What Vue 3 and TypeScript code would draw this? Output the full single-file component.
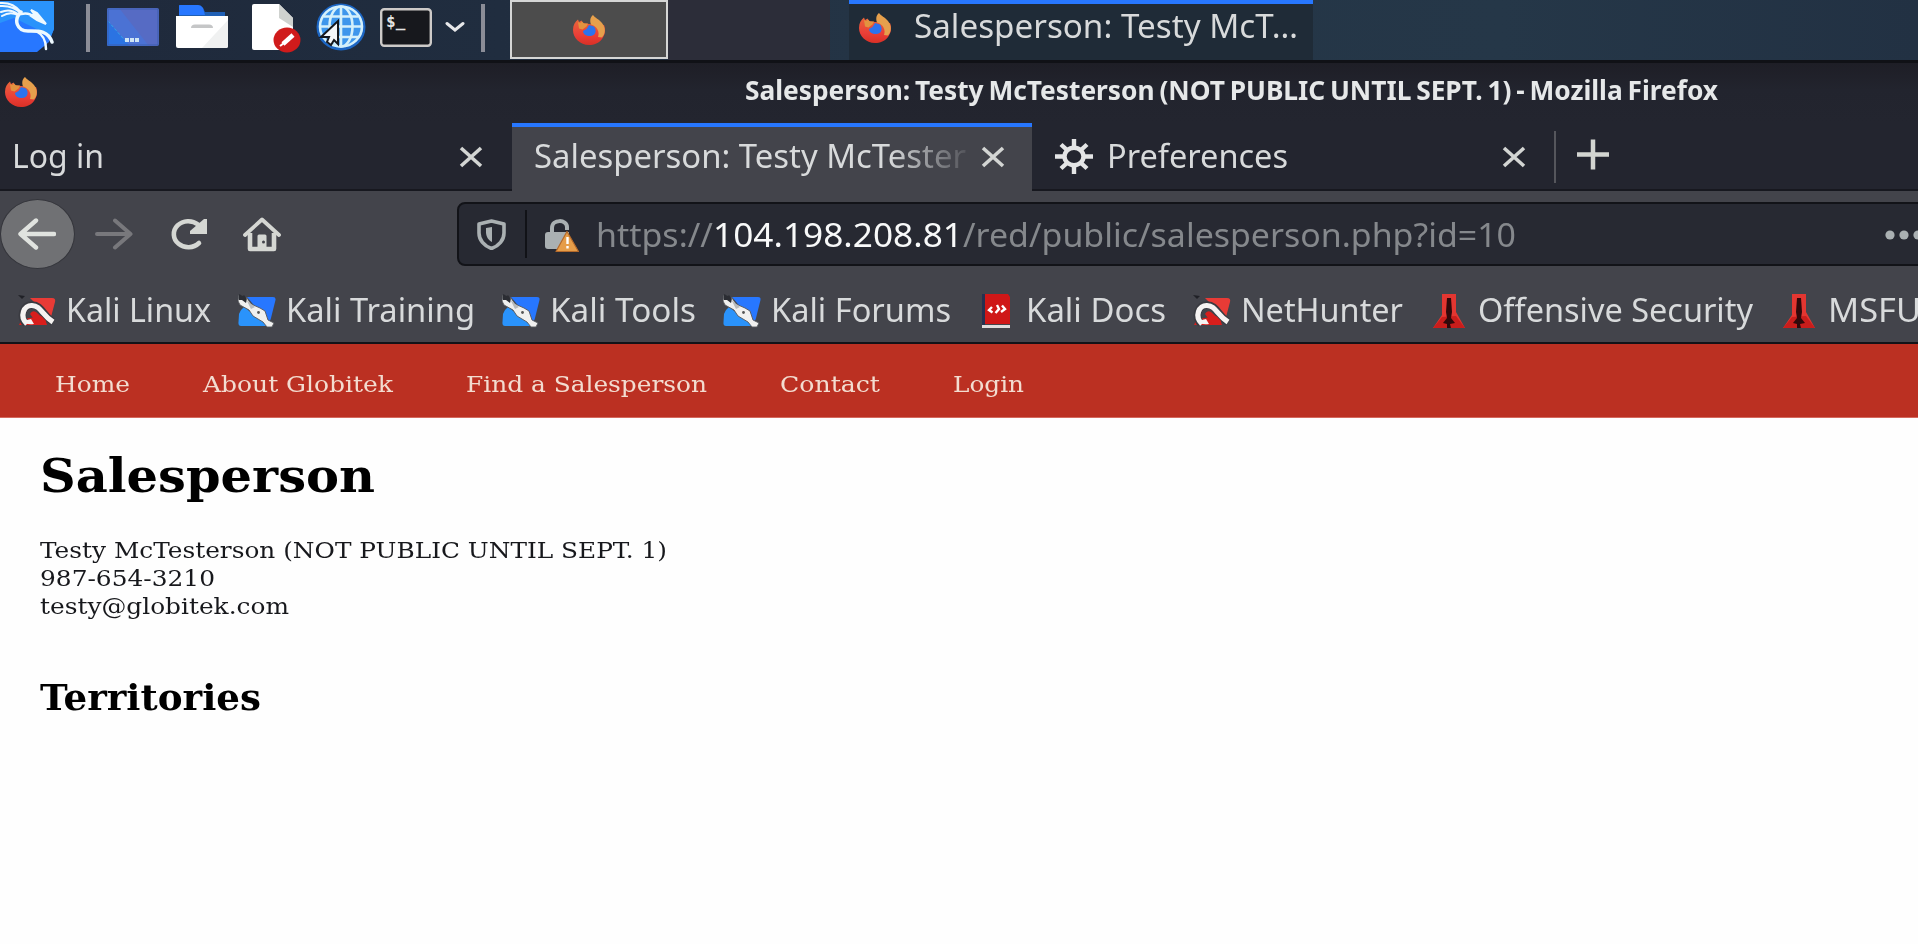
<script setup lang="ts">
import type { Directive } from 'vue'

interface Bookmark {
  label: string
  icon: 'dragon-red' | 'dragon-blue' | 'docs' | 'offsec'
  width: number
}

interface NavLink {
  label: string
  width: number
}

// Stretches a line of text horizontally so that it takes exactly the given width.
const vFit: Directive<HTMLElement, number> = {
  mounted(el, binding) {
    const natural = el.getBoundingClientRect().width
    if (!natural) return
    el.style.transform = `scaleX(${binding.value / natural})`
    el.style.marginRight = `${binding.value - natural}px`
  },
}

const bookmarks: Bookmark[] = [
  { label: 'Kali Linux', icon: 'dragon-red', width: 145 },
  { label: 'Kali Training', icon: 'dragon-blue', width: 189 },
  { label: 'Kali Tools', icon: 'dragon-blue', width: 146 },
  { label: 'Kali Forums', icon: 'dragon-blue', width: 180 },
  { label: 'Kali Docs', icon: 'docs', width: 140 },
  { label: 'NetHunter', icon: 'dragon-red', width: 162 },
  { label: 'Offensive Security', icon: 'offsec', width: 275 },
  { label: 'MSFU', icon: 'offsec', width: 93 },
]

const links: NavLink[] = [
  { label: 'Home', width: 75 },
  { label: 'About Globitek', width: 190 },
  { label: 'Find a Salesperson', width: 241 },
  { label: 'Contact', width: 100 },
  { label: 'Login', width: 71 },
]
</script>

<template>
  <svg class="defs" aria-hidden="true">
    <defs>
      <linearGradient id="ffBody" x1="0" y1="0" x2="0" y2="1">
        <stop offset="0" stop-color="#e8663a" />
        <stop offset="0.6" stop-color="#ea3f38" />
        <stop offset="1" stop-color="#d93026" />
      </linearGradient>
      <symbol id="firefox" viewBox="0 0 34 31" preserveAspectRatio="none">
        <path d="M1 16C1 11 3 8 6 5.500L7 8L9.500 6.500L11 9L17 10L32 11C34 16 33 21 30 25C27 29 22 31 17 31C8 31 1 24 1 16Z" fill="url(#ffBody)" />
        <path d="M21 1C23 4 27 5 30 9C34 14 33.500 20 30 23.500L26 23C28 18 25 12 19 10.500C17.500 6 18.500 3 21 1Z" fill="#e6a04c" />
        <path d="M6 8L8 9L10 7.500L12 9.500L16 9.500L14.500 12.500L10.500 15.500L7 14.500Z" fill="#e2933f" />
        <path d="M17 11L22 12.500C25 16 24 22 18 22C14 22 11 20 11 17L14.500 15Z" fill="#2b73ee" />
      </symbol>
      <symbol id="dragon-blue" viewBox="0 0 38 34" preserveAspectRatio="none">
        <path d="M9 3H35Q38 3 37.500 6L33 24Q32 28 29 27Z" fill="#2777ff" />
        <path d="M1 20Q2 16 6 13L31 32H3Q0 32 0.500 28Z" fill="#2a93fb" />
        <path d="M1 1L9 4L13 10L22 14L27 17L30 26L36 29L34 33L29 33L25 28L15 22L11 16L2 11L0 7Z" fill="#f0f0ef" stroke="#55585c" stroke-width="0.900" />
        <path d="M1 0L5 2L6 1L9 5L8 9L4 6L1 6Z" fill="#2b2d33" />
        <path d="M8 5L12 9L17 13L13 15Z" fill="#b9bbbc" />
        <circle cx="20.500" cy="18.500" r="1.400" fill="#555" />
      </symbol>
      <symbol id="dragon-red" viewBox="0 0 38 34" preserveAspectRatio="none">
        <path d="M12 4H34Q38 4 37 8L33 23L24 16Z" fill="#e83b36" />
        <path d="M1 31L4 25L26 22L29 31Z" fill="#d81e1c" />
        <path d="M0 1L7 2L4 5Z" fill="#202127" />
        <path d="M8 30C1 22 5 11 14 11C24 11 24 21 35 28" fill="none" stroke="#3a3b41" stroke-width="7.500" />
        <path d="M9 30C1 22 6 11 14 11.500C23 12 23 20 35 28" fill="none" stroke="#f5f3f2" stroke-width="5.200" />
        <path d="M5 27Q7 31 16 30L13 25Z" fill="#f5f3f2" />
        <path d="M12 20Q14 16 18 18L28 27L27 31H20Z" fill="#d81e1c" />
      </symbol>
      <symbol id="docs" viewBox="0 0 38 34" preserveAspectRatio="none">
        <rect x="4" y="0" width="3" height="32" fill="#263050" />
        <path d="M7 0H30L32 3V30H7Z" fill="#cf1717" />
        <rect x="4" y="31" width="28" height="3" fill="#dfdddd" />
        <path d="M14 13L11 16L14.500 18.500M19 11L21 15L17.500 19M24 11.500L27 15L23 18" fill="none" stroke="#fff" stroke-width="2.400" />
      </symbol>
      <symbol id="offsec" viewBox="0 0 38 34" preserveAspectRatio="none">
        <path d="M12 0H26V18L35 34H3L12 21Z" fill="#e33631" />
        <path d="M12 23L3 34H35L26 22Z" fill="#c91d1b" />
        <path d="M17 4H21L22 18L21 24L25 29L20 30L21 34H17L17 30L13 29L17 24L16 18Z" fill="#30090b" />
      </symbol>
    </defs>
  </svg>

  <div class="screen">
    <header class="taskbar">
      <svg class="kali" viewBox="0 0 54 52">
        <path d="M0 0H54V28L49 41L37 51H0Z" fill="#2777ff" />
        <path d="M0 0H54V28L51 35L14 17L0 22Z" fill="#2a93fb" />
        <g fill="none" stroke="#eef9ff" stroke-linecap="round">
          <path d="M0 5Q13 4 22 13M0 2Q13 1 21 11M1 11Q10 7 18 13M2 15Q10 10 18 14" stroke-width="2" />
          <path d="M21 11C13 19 17 30 28 30C38 30 48 29 52 41" stroke-width="3.500" />
          <path d="M36 30Q46 35 46 48M21 13Q29 11 34 16" stroke-width="2.500" />
          <path d="M31 9L37 12L46 23L37 19L31 15L34 13Z" stroke-width="2" fill="#eef9ff" />
        </g>
      </svg>
      <i class="sep"></i>
      <svg class="desktop" viewBox="0 0 52 38">
        <rect width="52" height="38" rx="2" fill="#566bc4" />
        <path d="M0 2Q0 0 2 0H12L42 38H2Q0 38 0 36Z" fill="#4b72d4" />
        <path d="M0 12L23 38H2Q0 38 0 36Z" fill="#2b73e2" />
        <path d="M1 13L20 35" stroke="#35a3e8" stroke-dasharray="3 2" />
        <path d="M1 1H51V37H1Z" fill="none" stroke="#3c5fae" stroke-width="1" />
        <path d="M18 32H33" stroke="#cfe5f5" stroke-width="4" stroke-dasharray="4 1" />
      </svg>
      <svg class="folder" viewBox="0 0 52 44">
        <path d="M3 1Q3 0 4 0H22Q25 0 27 3L29 7H49V14H3Z" fill="#1f5fb4" />
        <path d="M3 1Q3 0 4 0H22Q25 0 27 3L29 10H3Z" fill="#2777ff" />
        <path d="M0 11H52V41Q52 43 50 43H2Q0 43 0 41Z" fill="#fff" />
        <path d="M52 15V41Q52 43 50 43H26Z" fill="#f0f1f1" />
        <path d="M15 23Q15 19.500 19 19.500H33Q37 19.500 37 23Z" fill="#c5c6c7" />
      </svg>
      <svg class="doc" viewBox="0 0 49 49">
        <path d="M2 0H27L41 14V46H2Q0 46 0 44V2Q0 0 2 0Z" fill="#fff" />
        <path d="M27 0L41 14V23L27 14Z" fill="#cfd2cf" />
        <ellipse cx="35" cy="36" rx="13.500" ry="12.500" fill="#d01b1b" />
        <path d="M31 40L41 31" stroke="#fff" stroke-width="4.500" />
        <path d="M28 42L32 39" stroke="#fff" stroke-width="2" />
      </svg>
      <svg class="globe" viewBox="0 0 50 48">
        <ellipse cx="25" cy="24" rx="24.500" ry="23.500" fill="#1c66c4" />
        <ellipse cx="25" cy="23.500" rx="22" ry="21" fill="#3d96ec" />
        <g fill="none" stroke="#d4f0fb" stroke-width="2.600">
          <ellipse cx="25" cy="23.500" rx="21" ry="20" />
          <ellipse cx="25" cy="23.500" rx="11.500" ry="20" />
          <path d="M25 3V44M4 23.500H46M8 13.500H42M8 34H42" />
        </g>
        <path d="M22 18V41L18 37L15 42L11 39L13 34L5 34Z" fill="#f4f7fa" stroke="#14171d" stroke-width="2" />
      </svg>
      <svg class="terminal" viewBox="0 0 52 39">
        <rect x="1.200" y="1.200" width="49.600" height="36.600" rx="3" fill="#17181d" stroke="#cdcac8" stroke-width="2.400" />
        <text x="6" y="19" class="prompt">$_</text>
      </svg>
      <svg class="chevron" viewBox="0 0 20 12">
        <path d="M2 2.500L10 9L18 2.500" fill="none" stroke="#e7e8ea" stroke-width="3" stroke-linecap="round" />
      </svg>
      <i class="sep last"></i>
      <div class="workspace"><svg class="ff"><use href="#firefox" /></svg></div>
      <div class="workspace-idle"></div>
      <div class="task">
        <svg class="ff"><use href="#firefox" /></svg>
        <span v-fit="384" class="ui">Salesperson: Testy McT…</span>
      </div>
    </header>

    <div class="titlebar">
      <svg class="ff"><use href="#firefox" /></svg>
      <span v-fit="973" class="title">Salesperson: Testy McTesterson (NOT PUBLIC UNTIL SEPT. 1) - Mozilla Firefox</span>
    </div>

    <div class="tabs">
      <div class="tab first">
        <span v-fit="92" class="ui">Log in</span>
        <svg class="close" viewBox="0 0 24 22"><path d="M2 2L22 20M22 2L2 20" /></svg>
      </div>
      <div class="tab active">
        <div class="fade"><span v-fit="432" class="ui">Salesperson: Testy McTester</span></div>
        <svg class="close" viewBox="0 0 24 22"><path d="M2 2L22 20M22 2L2 20" /></svg>
      </div>
      <div class="tab prefs">
        <svg class="gear" viewBox="0 0 38 35">
          <ellipse cx="19" cy="17.500" rx="9.500" ry="8.700" fill="none" stroke="#e4e5e6" stroke-width="4.400" />
          <path d="M19 0V7M19 28V35M0 17.500H8M30 17.500H38M6 5.500L12 11M26 24L32 29.500M32 5.500L26 11M12 24L6 29.500" stroke="#e4e5e6" stroke-width="4.400" />
        </svg>
        <span v-fit="181" class="ui">Preferences</span>
        <svg class="close" viewBox="0 0 24 22"><path d="M2 2L22 20M22 2L2 20" /></svg>
      </div>
      <i class="tab-sep"></i>
      <svg class="plus" viewBox="0 0 34 31"><path d="M1 15.500H33M17 0.500V30.500" stroke="#d3d5d1" stroke-width="4.500" /></svg>
    </div>

    <div class="toolbar">
      <div class="back">
        <svg viewBox="0 0 38 32"><path d="M36 16H3M18 2.500L2.500 16L18 29.500" fill="none" stroke="#e0e3df" stroke-width="4.400" stroke-linecap="round" stroke-linejoin="round" /></svg>
      </div>
      <svg class="forward" viewBox="0 0 38 32"><path d="M2 16H35M20 2.500L35.500 16L20 29.500" fill="none" stroke="#78787c" stroke-width="4" stroke-linecap="round" stroke-linejoin="round" /></svg>
      <svg class="reload" viewBox="0 0 37 32">
        <path d="M28 25A14.500 13 0 1 1 27 6.500" fill="none" stroke="#d5d7d3" stroke-width="4.600" stroke-linecap="round" />
        <path d="M36 1V16H19V13L33 1Z" fill="#d5d7d3" />
      </svg>
      <svg class="home" viewBox="0 0 38 35">
        <path d="M2 18L19 2.500L36 18" fill="none" stroke="#d5d7d3" stroke-width="3.800" stroke-linecap="round" stroke-linejoin="round" />
        <path d="M7 16V32H31V16" fill="none" stroke="#d5d7d3" stroke-width="4.600" stroke-linejoin="round" />
        <path d="M14.500 33V19Q14.500 17.500 16 17.500H22Q23.500 17.500 23.500 19V33Z" fill="#d5d7d3" />
        <circle cx="20.500" cy="25" r="1.500" fill="#43444b" />
      </svg>
      <div class="urlbar">
        <svg class="shield" viewBox="0 0 29 31">
          <path d="M14.500 2L27 5V14C27 21 22 27 14.500 29.500C7 27 2 21 2 14V5Z" fill="none" stroke="#aab0b2" stroke-width="3.600" stroke-linejoin="round" />
          <path d="M15 8V23C11 21 9.500 18 9 14V9Z" fill="#aab0b2" />
        </svg>
        <i class="url-sep"></i>
        <svg class="lock" viewBox="0 0 34 33">
          <path d="M7 14V9C7 0 22 0 22 8V11" fill="none" stroke="#aab0b2" stroke-width="4" />
          <path d="M3 13H24V30H3Q0 30 0 27V16Q0 13 3 13Z" fill="#aab0b2" />
          <path d="M22 12.500L33.500 32.500H11Z" fill="#e69d49" stroke="#b56a2b" stroke-width="1.200" stroke-linejoin="round" />
          <path d="M22.500 18V25M22.500 27V29.500" stroke="#fff" stroke-width="2.400" />
        </svg>
        <div class="url">
          <span v-fit="117" class="ui dim">https://</span>
          <span v-fit="250" class="ui host">104.198.208.81</span>
          <span v-fit="553" class="ui dim">/red/public/salesperson.php?id=10</span>
        </div>
        <svg class="dots" viewBox="0 0 40 10">
          <circle cx="5" cy="5" r="4.600" /><circle cx="19" cy="5" r="4.600" /><circle cx="33" cy="5" r="4.600" />
        </svg>
      </div>
    </div>

    <div class="bookmarks">
      <div v-for="b in bookmarks" :key="b.label" class="bookmark">
        <svg class="bm-icon"><use :href="`#${b.icon}`" /></svg>
        <span v-fit="b.width" class="ui">{{ b.label }}</span>
      </div>
    </div>

    <nav class="nav">
      <a v-for="l in links" :key="l.label" v-fit="l.width">{{ l.label }}</a>
    </nav>

    <main class="page">
      <h1><span v-fit="335">Salesperson</span></h1>
      <p><span v-fit="627">Testy McTesterson (NOT PUBLIC UNTIL SEPT. 1)</span></p>
      <p><span v-fit="175">987-654-3210</span></p>
      <p><span v-fit="249">testy@globitek.com</span></p>
      <h2><span v-fit="221">Territories</span></h2>
    </main>
  </div>
</template>

<style>
body {
  margin: 0;
  overflow: hidden;
  background: #fefefe;
}
</style>

<style scoped>
.defs {
  position: absolute;
  width: 0;
  height: 0;
}
svg {
  display: block;
  flex: none;
}
.screen {
  width: 1918px;
  height: 944px;
  overflow: hidden;
  background: #fefefe;
  font-family: "Noto Sans", "Open Sans", sans-serif;
}
.screen span,
.nav a {
  display: inline-block;
  flex: none;
  white-space: nowrap;
  transform-origin: 0 50%;
}
.ui {
  font-size: 32px;
  line-height: 44px;
  color: #d8dadb;
}

.taskbar {
  box-sizing: border-box;
  height: 63px;
  display: flex;
  align-items: flex-start;
  border-bottom: 3px solid #101116;
  background: linear-gradient(90deg, #1f293b 0, #202d3f 500px, #243445 850px, #253748 1500px, #223143 1918px);
}
.taskbar > * { flex: none; }
.kali { width: 54px; height: 52px; margin-top: 1px; }
.sep { width: 4px; height: 48px; margin: 4px 17px 0 32px; background: #8b8d97; }
.desktop { width: 52px; height: 38px; margin-top: 8px; }
.folder { width: 52px; height: 44px; margin: 5px 0 0 17px; }
.doc { width: 49px; height: 49px; margin: 4px 0 0 24px; }
.globe { width: 50px; height: 48px; margin: 3px 0 0 15px; }
.terminal { width: 52px; height: 39px; margin: 8px 0 0 14px; }
.prompt { font: bold 16px "DejaVu Sans Mono", monospace; fill: #e4e4e4; }
.chevron { width: 20px; height: 12px; margin: 21px 0 0 13px; }
.sep.last { margin: 4px 25px 0 16px; }
.workspace {
  box-sizing: border-box;
  width: 158px;
  height: 59px;
  padding: 12px 0 0 60px;
  border: 2px solid #d5d6d5;
  background: #4c4c4c;
}
.workspace-idle { width: 162px; height: 60px; background: #2c2d39; }
.ff { width: 34px; height: 31px; }
.task {
  box-sizing: border-box;
  display: flex;
  width: 464px;
  height: 60px;
  margin-left: 19px;
  padding-left: 9px;
  border-top: 4px solid #2777ff;
  background: #1f2b37;
}
.task .ff { margin: 8px 22px 0 0; }
.task .ui { margin-top: 0; }

.titlebar {
  height: 60px;
  display: flex;
  background: linear-gradient(#1e1e26, #22242e 45%, #23252f);
}
.titlebar .ff { margin: 13px 0 0 4px; }
.title {
  margin: 9px 0 0 707px;
  font-size: 26px;
  line-height: 36px;
  font-weight: 700;
  word-spacing: -2px;
  color: #e6e8e9;
}

.tabs {
  height: 68px;
  display: flex;
  background: #23252f;
  box-shadow: inset 0 -2px #17181f;
}
.tab {
  box-sizing: border-box;
  height: 68px;
  display: flex;
}
.tab .ui { margin-top: 11px; }
.first { width: 512px; padding-left: 12px; }
.active {
  width: 520px;
  padding-left: 22px;
  border-top: 4px solid #2777ff;
  background: #43444b;
}
.active .ui { margin-top: 7px; }
.fade {
  width: 436px;
  overflow: hidden;
  -webkit-mask-image: linear-gradient(90deg, #000 355px, transparent 442px);
  mask-image: linear-gradient(90deg, #000 355px, transparent 442px);
}
.prefs { width: 522px; padding-left: 22px; }
.close {
  width: 24px;
  height: 22px;
  margin-top: 23px;
  fill: none;
  stroke: #d3d5d3;
  stroke-width: 3.6;
}
.first .close { margin-left: 355px; }
.active .close { margin: 19px 0 0 11px; }
.prefs .close { margin-left: 214px; }
.gear { width: 38px; height: 35px; margin: 16px 14px 0 1px; }
.tab-sep { width: 2px; height: 52px; margin-top: 8px; background: #55565c; }
.plus { width: 34px; height: 31px; margin: 16px 0 0 20px; }
.tab-sep,
.plus { flex: none; }

.toolbar {
  height: 84px;
  display: flex;
  align-items: flex-start;
  background: #43444b;
}
.back {
  box-sizing: border-box;
  flex: none;
  width: 75px;
  height: 70px;
  margin-top: 8px;
  padding: 18px 0 0 17px;
  border: 1px solid #34353b;
  border-radius: 50%;
  background: #707174;
}
.back svg,
.forward { width: 38px; height: 32px; }
.forward { margin: 27px 0 0 20px; }
.reload { width: 37px; height: 32px; margin: 27px 0 0 38px; }
.home { width: 38px; height: 35px; margin: 26px 0 0 35px; }
.urlbar {
  box-sizing: border-box;
  display: flex;
  flex: none;
  width: 1480px;
  height: 64px;
  margin: 11px 0 0 176px;
  border: 2px solid #121318;
  border-radius: 8px;
  background: #272932;
}
.shield { width: 29px; height: 31px; margin: 15px 0 0 18px; }
.url-sep { width: 2px; height: 48px; margin: 6px 0 0 19px; background: #111217; }
.lock { width: 34px; height: 33px; margin: 15px 0 0 18px; }
.url { display: flex; margin: 9px 0 0 17px; }
.dim { color: #85888c; }
.host { color: #f8f9f9; }
.dots { width: 40px; height: 10px; margin: 26px 0 0 369px; fill: #aab0b2; }

.bookmarks {
  box-sizing: border-box;
  height: 69px;
  display: flex;
  gap: 27px;
  padding: 13px 0 0 18px;
  border-bottom: 2px solid #121318;
  background: #43444b;
}
.bookmark { display: flex; gap: 10px; flex: none; }
.bm-icon { width: 38px; height: 34px; margin-top: 6px; }

.nav {
  box-sizing: border-box;
  height: 74px;
  display: flex;
  gap: 73px;
  padding: 26px 0 0 55px;
  border-bottom: 1px solid #d4695e;
  background: #bb3022;
}
.nav a {
  font-family: "DejaVu Serif", serif;
  font-size: 23px;
  line-height: 28px;
  color: #f3dcd0;
}
.page {
  padding-left: 40px;
  font-family: "DejaVu Serif", serif;
  font-size: 23px;
  color: #17181c;
}
h1, h2, p { margin: 0; }
h1 {
  margin-top: 30px;
  font-size: 46px;
  line-height: 56px;
  color: #000;
}
h1 + p { margin-top: 32px; }
p { line-height: 28px; }
h2 {
  margin-top: 57px;
  font-size: 34.5px;
  line-height: 42px;
  color: #000;
}
</style>
